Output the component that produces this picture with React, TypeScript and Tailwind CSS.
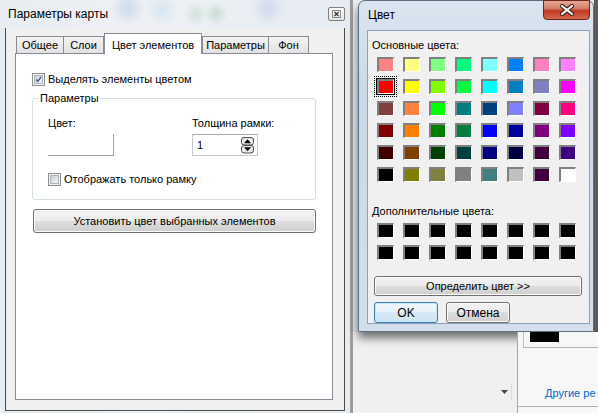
import React from "react";

const basicColors = [
  ["#FF8080", "#FFFF80", "#80FF80", "#00FF80", "#80FFFF", "#0080FF", "#FF80C0", "#FF80FF"],
  ["#FF0000", "#FFFF00", "#80FF00", "#00FF40", "#00FFFF", "#0080C0", "#8080C0", "#FF00FF"],
  ["#804040", "#FF8040", "#00FF00", "#008080", "#004080", "#8080FF", "#800040", "#FF0080"],
  ["#800000", "#FF8000", "#008000", "#008040", "#0000FF", "#0000A0", "#800080", "#8000FF"],
  ["#400000", "#804000", "#004000", "#004040", "#000080", "#000040", "#400040", "#400080"],
  ["#000000", "#808000", "#808040", "#808080", "#408080", "#C0C0C0", "#400040", "#FFFFFF"],
];

const customColors = Array.from({ length: 16 }, () => "#000000");

const btn =
  "flex items-center justify-center border border-[#707070] rounded-[3px] bg-[linear-gradient(#f2f2f2,#ebebeb_50%,#dddddd_50%,#cfcfcf)] shadow-[inset_0_0_0_1px_#fbfbfb] text-black";

function CheckBox({ checked }: { checked?: boolean }) {
  return (
    <span className="flex w-[13px] h-[13px] shrink-0 items-center justify-center border border-[#8e8f8f] bg-[#f4f4f4]">
      <span className="flex w-[9px] h-[9px] items-center justify-center border border-[#aeb3b9] bg-[linear-gradient(135deg,#cbcfd5,#f6f6f6)]">
        {checked && (
          <svg width="9" height="9" viewBox="0 0 9 9">
            <path d="M1.5 4.5 L3.6 7 L7.8 1.2" fill="none" stroke="#3e5b8c" strokeWidth="1.8" />
          </svg>
        )}
      </span>
    </span>
  );
}

function Swatch({ color, selected }: { color: string; selected?: boolean }) {
  return (
    <span className="relative block w-[17px] h-[15px]">
      <span
        className="block w-full h-full border-t-2 border-l-2 border-b border-r border-t-[#808080] border-l-[#808080] border-b-white border-r-white"
        style={{ backgroundColor: color }}
      />
      {selected && (
        <>
          <span className="absolute -inset-[1px] border border-black" />
          <span className="absolute -inset-[3px] border border-dotted border-black" />
        </>
      )}
    </span>
  );
}

function Tab({ label, w, active }: { label: string; w: string; active?: boolean }) {
  if (active) {
    return (
      <div className={`${w} relative z-10 -mb-px h-[21px] flex justify-center pt-[3px] border border-b-0 border-[#898c95] bg-white`}>
        {label}
      </div>
    );
  }
  return (
    <div className={`${w} h-[17px] flex items-center justify-center border border-b-0 border-[#898c95] bg-[linear-gradient(#f3f3f3,#e2e2e2)]`}>
      {label}
    </div>
  );
}

function MapSettings() {
  return (
    <div className="w-[350px] h-full flex flex-col bg-[linear-gradient(90deg,#e8edf2,#eef1f4_40%,#e6ecf2)] shrink-0">
      <div className="h-[28px] flex items-center pl-[8px] pr-[5px] bg-[radial-gradient(circle_at_128px_8px,rgba(80,130,210,0.2),transparent_18px),radial-gradient(circle_at_162px_10px,rgba(120,180,230,0.18),transparent_16px),radial-gradient(circle_at_196px_14px,rgba(60,160,90,0.15),transparent_12px),radial-gradient(circle_at_216px_14px,rgba(60,150,80,0.2),transparent_12px),radial-gradient(circle_at_268px_8px,rgba(110,120,220,0.18),transparent_18px)]">
        <span className="flex-1 text-[12px]">Параметры карты</span>
        <span className="w-[17px] h-[14px] flex items-center justify-center border border-[#7f7f7f] rounded-[2px] bg-[linear-gradient(#ffffff,#e4e4e4)]">
          <svg width="9" height="8" viewBox="0 0 9 8">
            <rect x="0.5" y="0.5" width="8" height="7" fill="none" stroke="#8a8a8a" />
            <path d="M2.5 2 L6.5 6 M6.5 2 L2.5 6" stroke="#333" strokeWidth="1.3" />
          </svg>
        </span>
      </div>
      <div className="flex-1 mx-[5px] mb-[2px] flex flex-col border-l border-r border-b border-[#4a4a4a] bg-[#f0f0f0] pt-[5px] pl-[9px] pr-[11px] pb-[10px]">
        <div className="flex items-end h-[20px]">
          <div className="w-px" />
          <Tab label="Общее" w="w-[48px]" />
          <div className="-ml-px" />
          <Tab label="Слои" w="w-[41px]" />
          <Tab label="Цвет элементов" w="w-[98px]" active />
          <Tab label="Параметры" w="w-[67px]" />
          <div className="-ml-px" />
          <Tab label="Фон" w="w-[41px]" />
        </div>
        <div className="flex-1 border border-[#898c95] bg-white flex flex-col">
          <div className="mt-[19px] ml-[16px] flex items-center gap-[3px] h-[13px]">
            <CheckBox checked />
            <span>Выделять элементы цветом</span>
          </div>
          <div className="relative mt-[12px] ml-[16px] w-[284px] h-[102px] border border-[#d5dfe5] rounded-[3px] pl-[15px] pt-[17px]">
            <span className="absolute left-[6px] -top-[8px] px-[1px] bg-white leading-[14px]">Параметры</span>
            <div className="flex">
              <div className="w-[144px] flex flex-col">
                <span className="leading-[14px]">Цвет:</span>
                <div className="mt-[4px] w-[66px] h-[22px] border-r border-b border-[#a3a3a3]" />
              </div>
              <div className="flex flex-col">
                <span className="leading-[14px]">Толщина рамки:</span>
                <div className="mt-[4px] w-[66px] h-[22px] flex items-center border border-[#c5cad2] border-t-[#abadb3] pl-[4px] pr-[3px]">
                  <span className="flex-1">1</span>
                  <svg width="13" height="17" viewBox="0 0 13 17">
                    <rect x="0.5" y="0.5" width="12" height="7.5" rx="2.5" fill="#ececec" stroke="#4a4a4a" />
                    <rect x="0.5" y="8.5" width="12" height="7.5" rx="2.5" fill="#ececec" stroke="#4a4a4a" />
                    <path d="M3 6.3 L6.5 2.3 L10 6.3Z" fill="#000" />
                    <path d="M3 10.2 L6.5 14.2 L10 10.2Z" fill="#000" />
                  </svg>
                </div>
              </div>
            </div>
            <div className="mt-[17px] flex items-center gap-[3px] h-[13px]">
              <CheckBox />
              <span>Отображать только рамку</span>
            </div>
          </div>
          <div className={`${btn} mt-[9px] ml-[17px] w-[283px] h-[24px]`}>Установить цвет выбранных элементов</div>
        </div>
      </div>
    </div>
  );
}

function ColorDialog() {
  return (
    <div className="w-[236px] h-[332px] shrink-0 flex flex-col rounded-t-[7px] border border-[#5d6f84] bg-[linear-gradient(#dbe5f0,#cad8e7_30%,#d3dfec)] pl-[8px] pr-[3px] pb-[7px] shadow-[0_6px_10px_rgba(0,0,0,0.55)]">
      <div className="h-[29px] flex items-start">
        <span className="flex-1 pl-[1px] pt-[5px] text-[12px]">Цвет</span>
        <span className="-mt-px w-[47px] h-[20px] flex items-center justify-center rounded-b-[4px] border border-[#6a2418] bg-[linear-gradient(#e8a796,#d5806b_40%,#c2391f_55%,#d36a50)]">
          <svg width="16" height="12" viewBox="0 0 16 12">
            <path d="M3 2 L13 10 M13 2 L3 10" stroke="#3b2620" strokeWidth="4.2" strokeLinecap="round" />
            <path d="M3 2 L13 10 M13 2 L3 10" stroke="#ffffff" strokeWidth="2.2" strokeLinecap="round" />
          </svg>
        </span>
      </div>
      <div className="flex-1 flex flex-col bg-[#f0f0f0] border border-[#8fa1b5]">
        <span className="pl-[4px] pt-[7px] leading-[14px]">Основные цвета:</span>
        <div className="mt-[5px] ml-[9px] grid grid-cols-[repeat(8,17px)] gap-x-[9px] gap-y-[7px]">
          {basicColors.flat().map((c, i) => (
            <Swatch key={i} color={c} selected={i === 8} />
          ))}
        </div>
        <span className="pl-[4px] mt-[22px] leading-[14px]">Дополнительные цвета:</span>
        <div className="mt-[5px] ml-[9px] grid grid-cols-[repeat(8,17px)] gap-x-[9px] gap-y-[7px]">
          {customColors.map((c, i) => (
            <Swatch key={i} color={c} />
          ))}
        </div>
        <div className={`${btn} mt-[16px] ml-[6px] w-[208px] h-[20px]`}>Определить цвет &gt;&gt;</div>
        <div className="mt-[6px] ml-[6px] flex gap-[8px]">
          <div className="w-[64px] h-[21px] flex items-center justify-center border border-[#3c7fb1] rounded-[3px] bg-[linear-gradient(#f3f9fd,#e6f1fa_50%,#d8e9f6_50%,#cfe3f3)] shadow-[inset_0_0_0_1px_#c5e9fb] text-[12px]">
            OK
          </div>
          <div className={`${btn} w-[64px] h-[21px] text-[12px]`}>Отмена</div>
        </div>
      </div>
    </div>
  );
}

export default function App() {
  return (
    <div className="w-[598px] h-[413px] overflow-hidden flex bg-[#f0f0f0] text-[11px] text-black font-['Liberation_Sans',Arial,sans-serif]">
      <MapSettings />
      <div className="flex-1 flex flex-col">
        <div className="flex h-[332px]">
          <div className="w-[3px] bg-[#9c9c9c]" />
          <div className="w-[5px] bg-[linear-gradient(#e9edf1,#dfe5ec)]" />
          <ColorDialog />
          <div className="flex-1 bg-[#5a5a5a]" />
        </div>
        <div className="flex-1 flex">
          <div className="w-[3px] bg-[#9c9c9c]" />
          <div className="w-[164px] flex flex-col justify-end pb-[12px] pr-[5px]">
            <div className="h-[18px] flex items-center justify-end border-r border-[#dcdcdc] pr-[3px]">
              <svg width="7" height="4" viewBox="0 0 7 4">
                <path d="M0 0 H7 L3.5 4Z" fill="#444" />
              </svg>
            </div>
          </div>
          <div className="flex-1 flex flex-col border-l border-[#a8a8a8] bg-[#f7f7f7]">
            <div className="flex h-[16px] border-b border-[#b4b4b4] ml-[5px]">
              <div className="border-l border-[#c0c0c0] w-[7px]" />
              <div className="w-[29px] h-[10px] bg-black" />
            </div>
            <span className="mt-[37px] ml-[27px] text-[11px] text-[#0066cc] whitespace-nowrap">Другие ре</span>
            <div className="mt-[4px] border-t border-[#b4b4b4]" />
          </div>
        </div>
      </div>
    </div>
  );
}
